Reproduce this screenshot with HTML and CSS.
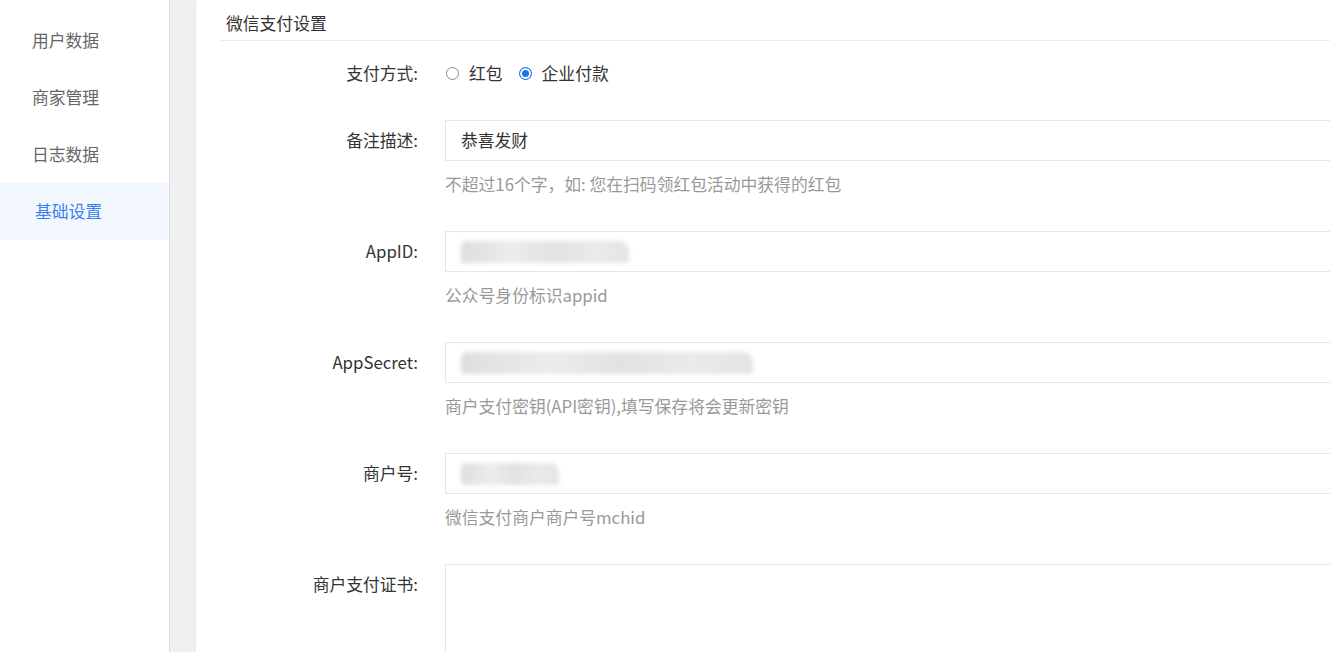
FILE: index.html
```html
<!DOCTYPE html>
<html lang="zh-CN">
<head>
    <meta charset="UTF-8">
    <meta name="viewport" content="width=device-width, initial-scale=1.0">
    <title>基础设置</title>
    <link rel="stylesheet" href="styles.css">
</head>
<body>
    <div class="layout">
        <!-- Sidebar -->
        <div class="sidebar">
            <div class="menu-item">用户数据</div>
            <div class="menu-item">商家管理</div>
            <div class="menu-item">日志数据</div>
            <div class="menu-item active">基础设置</div>
        </div>

        <div class="main">
            <div class="panel">
                <div class="panel-title">微信支付设置</div>

                <div class="form">
                    <div class="form-row radio-row">
                        <div class="label">支付方式:</div>
                        <div class="field radios">
                            <span class="radio-option"><span class="radio"></span>红包</span>
                            <span class="radio-option"><span class="radio checked"></span>企业付款</span>
                        </div>
                    </div>

                    <div class="form-row">
                        <div class="label">备注描述:</div>
                        <div class="field">
                            <div class="input">恭喜发财</div>
                            <div class="help">不超过16个字，如: 您在扫码领红包活动中获得的红包</div>
                        </div>
                    </div>

                    <div class="form-row">
                        <div class="label">AppID:</div>
                        <div class="field">
                            <div class="input"><span class="masked" style="width: 168px"></span></div>
                            <div class="help">公众号身份标识appid</div>
                        </div>
                    </div>

                    <div class="form-row">
                        <div class="label">AppSecret:</div>
                        <div class="field">
                            <div class="input"><span class="masked" style="width: 292px"></span></div>
                            <div class="help">商户支付密钥(API密钥),填写保存将会更新密钥</div>
                        </div>
                    </div>

                    <div class="form-row">
                        <div class="label">商户号:</div>
                        <div class="field">
                            <div class="input"><span class="masked" style="width: 98px"></span></div>
                            <div class="help">微信支付商户商户号mchid</div>
                        </div>
                    </div>

                    <div class="form-row">
                        <div class="label">商户支付证书:</div>
                        <div class="field">
                            <div class="textarea"></div>
                        </div>
                    </div>
                </div>
            </div>
        </div>
    </div>
</body>
</html>
```

FILE: styles.css
```css
body {
    margin: 0;
    font-family: "Noto Sans CJK SC", "Noto Sans", sans-serif;
    font-size: 16.8px;
    color: #333;
    background-color: #fff;
    overflow: hidden;
}
.layout {
    display: flex;
    height: 652px;
}
.sidebar {
    width: 170px;
    flex-shrink: 0;
    padding-top: 12px;
    background-color: #fff;
    border-right: 1px solid #dcdcdc;
    box-sizing: border-box;
}
.menu-item {
    height: 57px;
    line-height: 57px;
    padding-left: 32px;
    color: #666;
}
.menu-item.active {
    background-color: #f3f8fe;
    color: #3b7ff0;
    padding-left: 35px;
}
.main {
    flex: 1;
    background-color: #f0f0f0;
    padding-left: 26px;
    min-width: 0;
}
.panel {
    background-color: #fff;
    height: 100%;
    padding-left: 24px;
    box-shadow: -1px 0 2px rgba(0, 0, 0, 0.04);
}
.panel-title {
    padding: 6px 0 0 6px;
    line-height: 34px;
    color: #333;
    border-bottom: 1px solid #ececec;
}
.form-row {
    display: flex;
    margin-bottom: 35px;
}
.radio-row {
    margin-top: 12px;
    margin-bottom: 27px;
    line-height: 40px;
}
.label {
    width: 225px;
    flex-shrink: 0;
    padding-right: 27px;
    box-sizing: border-box;
    text-align: right;
    line-height: 41px;
    color: #333;
}
.radio-row .label {
    line-height: 40px;
}
.field {
    width: 1000px;
    flex-shrink: 0;
}
.radios {
    display: flex;
    align-items: center;
    gap: 15px;
}
.radio-option {
    display: flex;
    align-items: center;
}
.radio {
    width: 11px;
    height: 11px;
    border: 1px solid #888;
    border-radius: 50%;
    margin: 0 10px 0 1px;
    box-sizing: content-box;
}
.radio.checked {
    border-color: #1a73e8;
    background-color: #1a73e8;
    box-shadow: inset 0 0 0 2px #fff;
}
.input {
    height: 41px;
    line-height: 41px;
    border: 1px solid #e6e6e6;
    box-sizing: border-box;
    padding-left: 15px;
    color: #333;
    display: flex;
    align-items: center;
}
.masked {
    display: block;
    height: 22px;
    background: linear-gradient(90deg, #dedede, #ececec 30%, #e2e2e2 55%, #eaeaea 80%, #e4e4e4);
    filter: blur(2px);
    border-radius: 6px 10px 4px 2px;
}
.help {
    margin-top: 11px;
    line-height: 24px;
    color: #999;
}
.textarea {
    height: 120px;
    border: 1px solid #e6e6e6;
    box-sizing: border-box;
}
```
